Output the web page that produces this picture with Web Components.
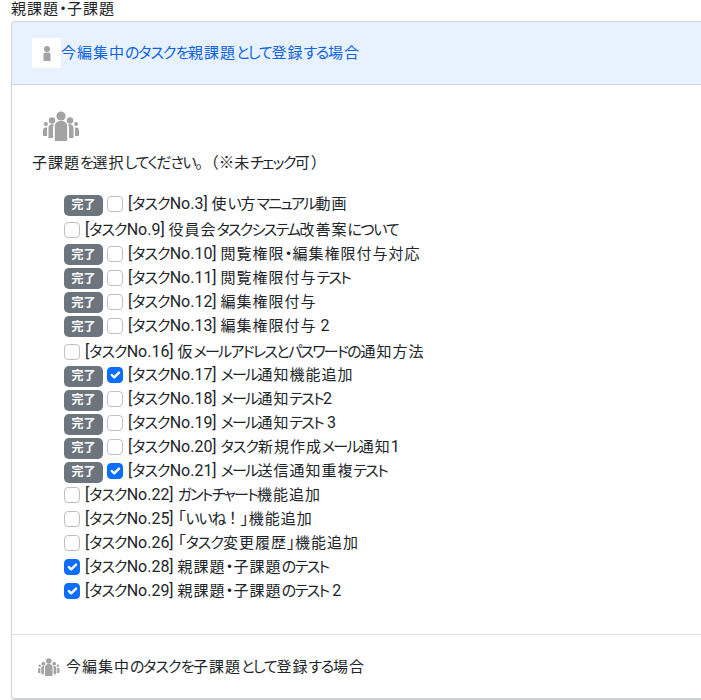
<!DOCTYPE html>
<html lang="ja"><head><meta charset="utf-8"><title>親課題・子課題</title>
<style>
html,body{margin:0;height:700px;overflow:hidden;background:#fff}
body{font-family:Roboto,"Noto Sans CJK JP",sans-serif;font-size:16px;line-height:24px;color:#212529}
.l{font-size:16px}
.c{font-size:15px;letter-spacing:1px}
.k{font-size:15px;font-feature-settings:"palt";letter-spacing:-1.7px}
.t{font-size:15px;font-feature-settings:"palt";letter-spacing:-.9px}
.h{font-size:15px;font-feature-settings:"palt";letter-spacing:-1.3px}
.p{font-size:15.5px}
.d{font-feature-settings:"palt"}
</style></head><body>
<template id="t-person"><style>:host{display:inline-flex}svg{display:block}</style>
<svg width="29" height="30" viewBox="0 0 29 30"><rect width="29" height="30" fill="#fff"/><circle cx="15" cy="11" r="3" fill="#a3a3a3"/><path d="M11.500 16.500a2 2 0 0 1 2-2h3a2 2 0 0 1 2 2V23h-7z" fill="#a3a3a3"/></svg></template>
<template id="t-group"><style>:host{display:inline-flex}svg{display:block}</style>
<svg viewBox="0 0 36 30"><g fill="#a3a3a3">
<circle cx="18" cy="5" r="4.600"/><path d="M11.800 15.500c0-3.500 2.500-5.500 6.200-5.500s6.200 2 6.200 5.500V30H11.800z"/>
<circle cx="9" cy="9.500" r="3.200"/><path d="M5.500 17c0-2.500 1.500-3.800 3.800-3.800.8 0 1.200.1 1.500.3-.6 1-.8 2-.8 3.200V27H5.500z"/>
<circle cx="27" cy="9.500" r="3.200"/><path d="M30.500 17c0-2.500-1.500-3.800-3.800-3.800-.8 0-1.200.1-1.500.3.6 1 .8 2 .8 3.200V27h4.500z"/>
<circle cx="2.900" cy="13" r="2"/><path d="M0 19.500C0 17.500 1 16.500 3 16.500h1.300c-.3.6-.3 1.300-.3 2V25H0z"/>
<circle cx="33.100" cy="13" r="2"/><path d="M36 19.500c0-2-1-3-3-3h-1.300c.3.6.3 1.300.3 2V25h4z"/>
</g></svg></template>
<template id="t-row"><style>
:host{display:flex;align-items:center;height:24px;white-space:nowrap}
:host([shift]){margin-top:2px;margin-bottom:-.5px}
.badge{display:none;align-items:center;justify-content:center;width:39px;height:21px;margin:2px 4px 0 0;border-radius:5px;background:#6c757d;color:#fff;font-size:12px;font-weight:700;line-height:1}
:host([done]) .badge{display:inline-flex}
.box{box-sizing:border-box;width:16px;height:16px;margin-right:5px;border:1px solid #bfbfbf;border-radius:4px;background:#fff;flex:none}
:host([checked]) .box{background:#0d6efd;border-color:#0d6efd}
svg{display:none;width:16px;height:16px;margin:-1px}
:host([checked]) svg{display:block}
</style><span class="badge">完了</span><span class="box"><svg viewBox="0 0 20 20"><path fill="none" stroke="#fff" stroke-linecap="round" stroke-linejoin="round" stroke-width="3" d="M6 10l3 3 6-6"/></svg></span><slot></slot></template>
<template id="t-acc"><style>
:host{display:block;box-sizing:border-box;width:720px;border:1px solid #cfd4da;border-bottom-width:2px;border-radius:4px;background:#fff;overflow:hidden}
</style><slot></slot></template>
<template id="t-head"><style>
:host{display:flex;align-items:center;height:63px;padding-left:20px;box-sizing:border-box;background:#e7f1ff;color:#0c63e4;border-bottom:1px solid #cfd4da}
</style><icon-person></icon-person><slot></slot></template>
<template id="t-body"><style>
:host{display:block;box-sizing:border-box;height:550px;padding:26px 20px 0;border-bottom:1px solid #dfdfdf}
icon-group{width:36px;height:30px;margin-left:11px}
.p{margin:3px 0 17px;height:24px}
.list{margin-left:32px}
</style><icon-group></icon-group><div class="p"><slot name="lead"></slot></div><div class="list"><slot></slot></div></template>
<template id="t-foot"><style>
:host{display:flex;align-items:center;gap:6px;height:63px;padding:0 26px;box-sizing:border-box}
icon-group{width:22px;height:18px}
</style><icon-group></icon-group><slot></slot></template>
<template id="t-page"><style>
:host{display:block;padding-left:11px}
.label{height:21px;line-height:17px}
</style><div class="label"><slot name="label"></slot></div><slot></slot></template>

<task-page>
<span slot="label">親課題・子課題</span>
<acc-box>
<acc-head>今編集中のタスクを親課題として登録する場合</acc-head>
<acc-body>
<span slot="lead">子課題を選択してください。（※未チェック可）</span>
<task-row done>[タスクNo.3] 使い方マニュアル動画</task-row>
<task-row shift>[タスクNo.9] 役員会タスクシステム改善案について</task-row>
<task-row done>[タスクNo.10] 閲覧権限・編集権限付与対応</task-row>
<task-row done>[タスクNo.11] 閲覧権限付与テスト</task-row>
<task-row done>[タスクNo.12] 編集権限付与</task-row>
<task-row done>[タスクNo.13] 編集権限付与 2</task-row>
<task-row shift>[タスクNo.16] 仮メールアドレスとパスワードの通知方法</task-row>
<task-row done checked>[タスクNo.17] メール通知機能追加</task-row>
<task-row done>[タスクNo.18] メール通知テスト2</task-row>
<task-row done>[タスクNo.19] メール通知テスト 3</task-row>
<task-row done>[タスクNo.20] タスク新規作成メール通知1</task-row>
<task-row done checked>[タスクNo.21] メール送信通知重複テスト</task-row>
<task-row>[タスクNo.22] ガントチャート機能追加</task-row>
<task-row>[タスクNo.25] 「いいね！」機能追加</task-row>
<task-row>[タスクNo.26] 「タスク変更履歴」機能追加</task-row>
<task-row checked>[タスクNo.28] 親課題・子課題のテスト</task-row>
<task-row checked>[タスクNo.29] 親課題・子課題のテスト 2</task-row>
</acc-body>
<acc-foot>今編集中のタスクを子課題として登録する場合</acc-foot>
</acc-box>
</task-page>
<script>
for (const [tag,id] of [['icon-person','t-person'],['icon-group','t-group'],['task-row','t-row'],['acc-box','t-acc'],['acc-head','t-head'],['acc-body','t-body'],['acc-foot','t-foot'],['task-page','t-page']]) {
  customElements.define(tag, class extends HTMLElement {
    constructor(){super();this.attachShadow({mode:'open'}).appendChild(document.getElementById(id).content.cloneNode(true));}
  });
}
const runs=/([\u30A0-\u30FF]+)|([\u3040-\u309F]+)|([「」]+)|([！（）。※]+)|([\x20-\x7e]+)|([\u4e00-\u9fff]+)/g;
const leaves=[...document.querySelectorAll('task-row,acc-head,acc-foot,span[slot]')];
for(const el of leaves){
  const wrap=document.createElement('span');
  for(const m of el.textContent.matchAll(runs)){
    const s=document.createElement('span');
    s.textContent=m[0];
    s.className=m[1]?(m[0]==='・'?'d':m[0]==='タスク'?'t':'k'):m[2]?'h':m[3]?'d':m[4]?'p':m[5]?'l':'c';
    wrap.appendChild(s);
  }
  el.textContent='';
  el.appendChild(wrap);
}
</script>
</body></html>
